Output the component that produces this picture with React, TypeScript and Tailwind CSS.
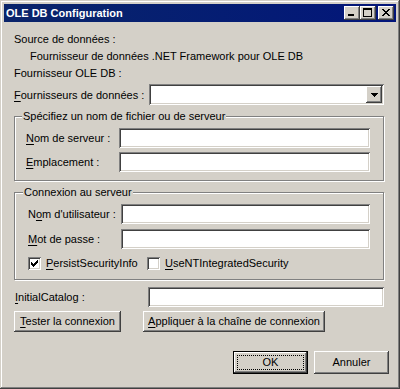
import React from "react";

const raised =
  "shadow-[inset_-1px_-1px_#404040,inset_1px_1px_#ffffff,inset_-2px_-2px_#808080,inset_2px_2px_#d4d0c8]";
const sunken =
  "shadow-[inset_1px_1px_#808080,inset_-1px_-1px_#ffffff,inset_2px_2px_#404040,inset_-2px_-2px_#d4d0c8]";

function Px({ rows, color = "#000" }: { rows: string[]; color?: string }) {
  const w = rows[0].length;
  const h = rows.length;
  const rects: React.ReactNode[] = [];
  rows.forEach((r, y) =>
    r.split("").forEach((c, x) => {
      if (c === "x") rects.push(<rect key={`${x}-${y}`} x={x} y={y} width={1} height={1} fill={color} />);
    })
  );
  return (
    <svg width={w} height={h} viewBox={`0 0 ${w} ${h}`} shapeRendering="crispEdges" className="block">
      {rects}
    </svg>
  );
}

function TitleButton({ children }: { children: React.ReactNode }) {
  return (
    <div className={`relative w-[16px] h-[14px] bg-[#d4d0c8] ${raised}`}>{children}</div>
  );
}

function Input({ w }: { w: string }) {
  return <div className={`h-[20px] bg-white ${sunken} ${w}`} />;
}

function Checkbox({ checked }: { checked?: boolean }) {
  return (
    <div className={`relative w-[13px] h-[13px] bg-white shrink-0 ${sunken}`}>
      {checked && (
        <div className="absolute left-[3px] top-[3px]">
          <Px rows={["......x", ".....xx", "x...xxx", "xx.xxx.", "xxxxx..", ".xxx...", "..x...."]} />
        </div>
      )}
    </div>
  );
}

function Btn({ w, children, def }: { w: string; children: React.ReactNode; def?: boolean }) {
  if (def)
    return (
      <div className={`relative ${w} h-[23px] border border-black bg-[#d4d0c8] ${raised} flex items-center justify-center`}>
        <div className="absolute left-[3px] top-[3px] right-[3px] bottom-[3px] border border-dotted border-black" />
        <span>{children}</span>
      </div>
    );
  return (
    <div className={`${w} h-[21px] bg-[#d4d0c8] ${raised} flex items-center justify-center`}>
      <span>{children}</span>
    </div>
  );
}

const U = ({ children }: { children: React.ReactNode }) => (
  <span className="underline underline-offset-[2px] decoration-1">{children}</span>
);

export default function App() {
  return (
    <div
      className={`w-[400px] h-[389px] bg-[#d4d0c8] p-[4px] flex flex-col text-black text-[11px] leading-[13px] font-['Liberation_Sans',Arial,sans-serif] shadow-[inset_-1px_-1px_#404040,inset_1px_1px_#d4d0c8,inset_-2px_-2px_#808080,inset_2px_2px_#ffffff]`}
    >
      {/* Title bar */}
      <div className="h-[18px] bg-gradient-to-r from-[#0a246a] to-[#03157a] flex items-center pl-[2px] pr-[2px]">
        <span className="text-white font-bold text-[11px] leading-[18px] flex-1">OLE DB Configuration</span>
        <div className="flex items-center">
          <TitleButton>
            <div className="absolute left-[4px] top-[8px] w-[6px] h-[2px] bg-black" />
          </TitleButton>
          <TitleButton>
            <div className="absolute left-[3px] top-[2px] w-[9px] h-[9px] border border-black border-t-2" />
          </TitleButton>
          <div className="ml-[2px]">
            <TitleButton>
              <div className="absolute left-[4px] top-[3px]">
                <Px rows={["xx....xx", ".xx..xx.", "..xxxx..", "...xx...", "..xxxx..", ".xx..xx.", "xx....xx"]} />
              </div>
            </TitleButton>
          </div>
        </div>
      </div>

      {/* Content */}
      <div className="pl-[10px] pr-[7px] flex flex-col">
        <div className="mt-[11px] h-[13px]">Source de données :</div>
        <div className="mt-[4px] h-[13px] pl-[16px]">Fournisseur de données .NET Framework pour OLE DB</div>
        <div className="mt-[4px] h-[13px]">Fournisseur OLE DB :</div>

        <div className="mt-[4px] flex h-[21px]">
          <div className="w-[135px] mt-[5px]">
            <U>F</U>ournisseurs de données :
          </div>
          <div className={`relative w-[235px] h-[21px] bg-white ${sunken}`}>
            <div
              className={`absolute right-[2px] top-[2px] w-[16px] h-[17px] bg-[#d4d0c8] ${raised} flex items-center justify-center`}
            >
              <Px rows={["xxxxxxx", ".xxxxx.", "..xxx..", "...x..."]} />
            </div>
          </div>
        </div>

        {/* Group 1 */}
        <div className="relative mt-[11px] w-[370px] border border-[#808080] shadow-[1px_1px_0_#ffffff,inset_1px_1px_0_#ffffff] pt-[11px] pb-[8px] pl-[11px] flex flex-col gap-[4px]">
          <span className="absolute left-[7px] top-[-7px] px-[1px] bg-[#d4d0c8]">
            Spécifiez un nom de fichier ou de serveur
          </span>
          <div className="flex items-center h-[20px]">
            <div className="w-[93px]">
              <U>N</U>om de serveur :
            </div>
            <Input w="w-[251px]" />
          </div>
          <div className="flex items-center h-[20px]">
            <div className="w-[93px]">
              <U>E</U>mplacement :
            </div>
            <Input w="w-[251px]" />
          </div>
        </div>

        {/* Group 2 */}
        <div className="relative mt-[11px] w-[370px] border border-[#808080] shadow-[1px_1px_0_#ffffff,inset_1px_1px_0_#ffffff] pt-[11px] pb-[9px] pl-[13px] flex flex-col">
          <span className="absolute left-[8px] top-[-7px] px-[1px] bg-[#d4d0c8]">Connexion au serveur</span>
          <div className="flex items-center h-[20px]">
            <div className="w-[93px]">
              N<U>o</U>m d'utilisateur :
            </div>
            <Input w="w-[249px]" />
          </div>
          <div className="flex items-center h-[20px] mt-[5px]">
            <div className="w-[93px]">
              <U>M</U>ot de passe :
            </div>
            <Input w="w-[249px]" />
          </div>
          <div className="flex items-center h-[13px] mt-[8px]">
            <div className="w-[119px] flex items-center gap-[5px]">
              <Checkbox checked />
              <span>
                <U>P</U>ersistSecurityInfo
              </span>
            </div>
            <div className="flex items-center gap-[5px]">
              <Checkbox />
              <span>
                <U>U</U>seNTIntegratedSecurity
              </span>
            </div>
          </div>
        </div>

        <div className="mt-[7px] flex items-center h-[20px]">
          <div className="w-[134px] pl-[1px]">
            <U>I</U>nitialCatalog :
          </div>
          <Input w="w-[236px]" />
        </div>

        <div className="mt-[4px] flex">
          <Btn w="w-[107px]">
            <U>T</U>ester la connexion
          </Btn>
          <div className="ml-[22px]">
            <Btn w="w-[182px]">
              <U>A</U>ppliquer à la chaîne de connexion
            </Btn>
          </div>
        </div>

        <div className="mt-[19px] flex justify-end gap-[6px]">
          <Btn w="w-[75px]" def>
            OK
          </Btn>
          <div className={`w-[75px] h-[23px] bg-[#d4d0c8] ${raised} flex items-center justify-center`}>Annuler</div>
        </div>
      </div>
    </div>
  );
}
